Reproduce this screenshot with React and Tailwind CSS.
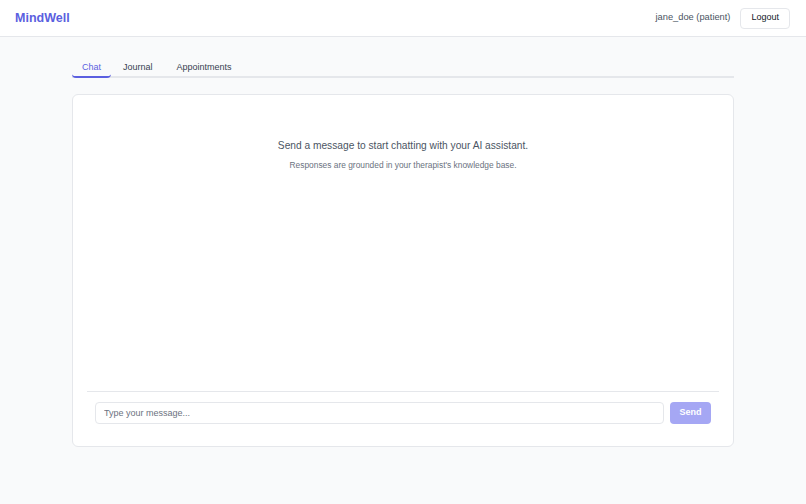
import { useState } from "react";

const tabs = ["Chat", "Journal", "Appointments"];

const App = () => {
    const [activeTab, setActiveTab] = useState("Chat");
    const [message, setMessage] = useState("");

    return (
        <div className="min-h-screen bg-[#f9fafb] font-['Liberation_Sans',Arial,sans-serif] text-[#1f2937]">
            {/* Header */}
            <header className="h-[37px] bg-white border-b border-[#e5e7eb] flex items-center justify-between pl-[15px] pr-[16px]">
                <h1 className="pt-[1px] text-[12.5px] font-bold text-[#5b5fe0]">MindWell</h1>
                <div className="flex items-center gap-[10px]">
                    <span className="text-[9.3px] text-[#4b5563]">jane_doe (patient)</span>
                    <button className="h-[21px] px-[10px] text-[9px] font-medium text-[#111827] bg-white border border-[#e5e7eb] rounded-[4px]">
                        Logout
                    </button>
                </div>
            </header>

            <main className="max-w-[662px] mx-auto pt-[19px]">
                {/* Tabs */}
                <div className="flex border-b-2 border-[#e5e7eb]">
                    {tabs.map(tab => (
                        <button
                            key={tab}
                            onClick={() => setActiveTab(tab)}
                            className={
                                tab === activeTab
                                    ? "px-[10px] h-[22px] pt-[3px] -mb-[2px] text-[9px] text-[#5b5fe0] border-b-2 border-[#5b5fe0] rounded-b-[4px]"
                                    : "px-[12px] h-[22px] pt-[3px] -mb-[2px] text-[9px] text-[#374151] border-b-2 border-transparent"
                            }
                        >
                            {tab}
                        </button>
                    ))}
                </div>

                {/* Chat card */}
                <div className="mt-[16px] h-[353px] bg-white border border-[#e5e7eb] rounded-[6px] p-[14px] flex flex-col">
                    <div className="flex-1 pt-[29px] text-center">
                        <p className="text-[10.2px] text-[#4b5563]">Send a message to start chatting with your AI assistant.</p>
                        <p className="mt-[6px] text-[8.4px] text-[#6b7280]">Responses are grounded in your therapist's knowledge base.</p>
                    </div>
                    <div className="border-t border-[#e5e7eb] px-[8px] pt-[10px] pb-[8px] flex gap-[6px]">
                        <input
                            className="flex-1 h-[22px] px-[8px] text-[9px] border border-[#e5e7eb] rounded-[4px] placeholder:text-[#6b7280] focus:outline-none"
                            placeholder="Type your message..."
                            value={message}
                            onChange={e => setMessage(e.target.value)}
                        />
                        <button
                            className="w-[41px] h-[22px] text-[9px] font-semibold text-white bg-[#a5a7f4] rounded-[4px]"
                            disabled={!message}
                        >
                            Send
                        </button>
                    </div>
                </div>
            </main>
        </div>
    );
};

export default App;
